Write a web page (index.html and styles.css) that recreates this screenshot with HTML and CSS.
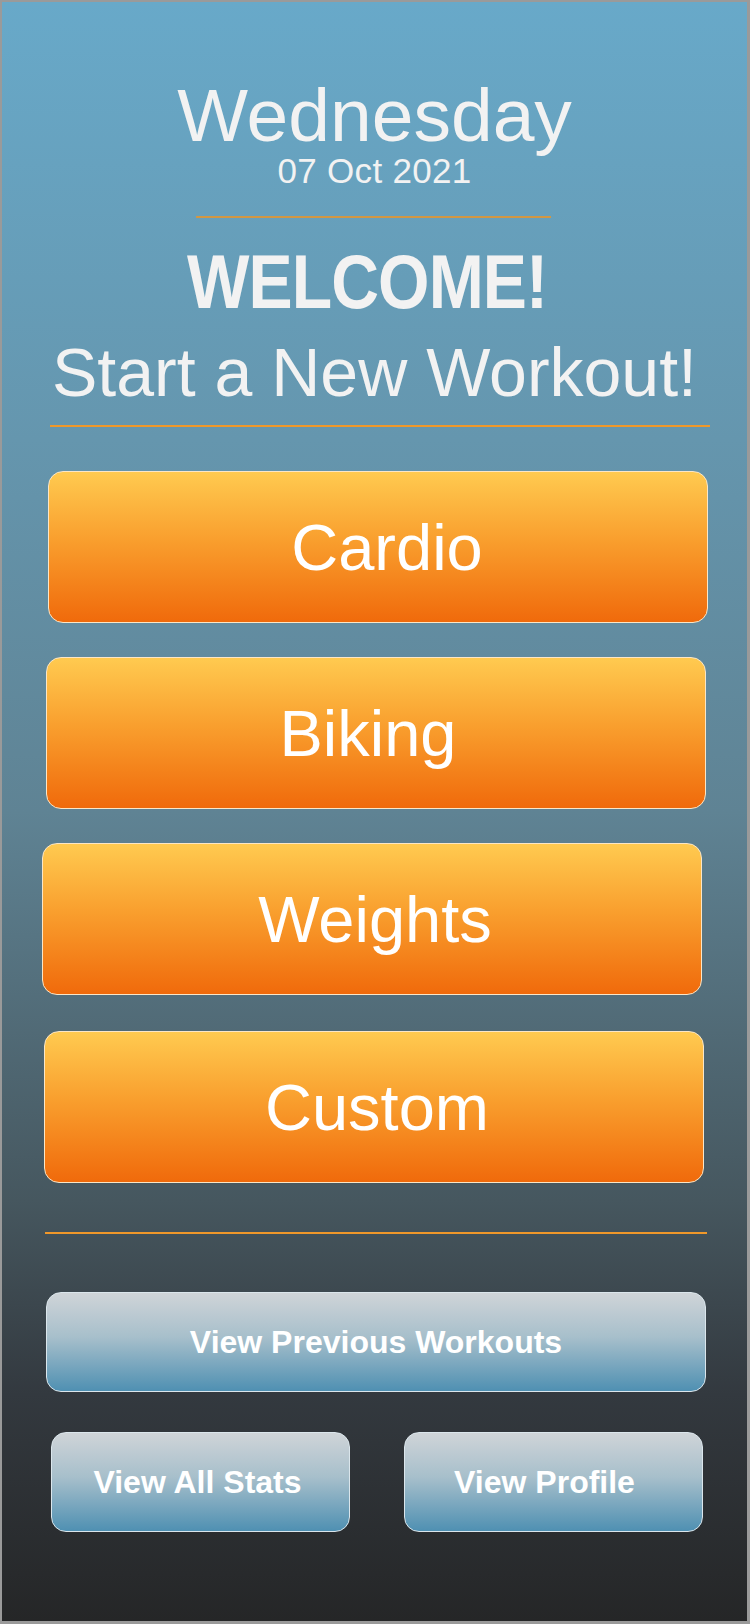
FILE: index.html
```html
<!DOCTYPE html>
<html lang="en">
<head>
<meta charset="utf-8">
<title>Workout Home</title>
<link rel="stylesheet" href="styles.css">
</head>
<body>
<main class="screen">
  <header class="header">
    <h1 class="day">Wednesday</h1>
    <p class="date">07 Oct 2021</p>
    <hr class="rule rule-short">
    <h2 class="welcome">WELCOME!</h2>
    <p class="start">Start a New Workout!</p>
    <hr class="rule rule-wide">
  </header>
  <section class="workouts">
    <button class="btn-orange b-cardio">Cardio</button>
    <button class="btn-orange b-biking">Biking</button>
    <button class="btn-orange b-weights">Weights</button>
    <button class="btn-orange b-custom">Custom</button>
  </section>
  <hr class="rule rule-bottom">
  <section class="nav">
    <button class="btn-blue b-previous">View Previous Workouts</button>
    <div class="nav-row">
      <button class="btn-blue b-small b-stats">View All Stats</button>
      <button class="btn-blue b-small b-profile">View Profile</button>
    </div>
  </section>
</main>
</body>
</html>
```
FILE: styles.css
```css
* { box-sizing: border-box; }
html, body { margin: 0; padding: 0; }
body { background: #9a9a9a; }

.screen {
  width: 750px;
  height: 1624px;
  border-style: solid;
  border-color: #9a9a9a;
  border-width: 2px 3px 3px 2px;
  background: linear-gradient(180deg, #68a9c9 0%, #6596ae 27%, #5f8394 50%, #46575f 74%, #33393f 86%, #252627 100%);
  font-family: "Liberation Sans", Arial, sans-serif;
  display: flex;
  flex-direction: column;
  align-items: flex-start;
  padding-top: 74px;
}

.header {
  width: 100%;
  display: flex;
  flex-direction: column;
  align-items: center;
  color: #f2f2f2;
}
.day {
  margin: 0;
  font-weight: 400;
  font-size: 75px;
  line-height: 78px;
}
.date {
  margin: 2px 0 0 0;
  font-size: 35px;
  line-height: 30px;
  letter-spacing: 0.3px;
}
.rule {
  border: 0;
  margin: 0;
  height: 2px;
  background: #e4952e;
}
.rule-short { width: 355px; margin-top: 30px; margin-left: -2px; opacity: 0.85; }
.welcome {
  margin: 24px 0 0 -14px;
  font-family: "Liberation Sans", Arial, sans-serif;
  font-weight: 700;
  font-size: 76px;
  line-height: 80px;
  letter-spacing: -1px;
  transform: scaleX(0.87);
}
.start {
  margin: 12px 0 0 0;
  font-size: 68px;
  line-height: 76px;
}
.rule-wide { width: 660px; margin-top: 15px; margin-left: 10px; background: #f0982a; }

.workouts {
  display: flex;
  flex-direction: column;
  gap: 34px;
  margin-top: 44px;
}
.btn-orange {
  width: 660px;
  height: 152px;
  border: 1.5px solid #fbe6c6;
  border-radius: 15px;
  background: linear-gradient(180deg, #ffca50 0%, #f99f2e 45%, #f06a0b 100%);
  color: #ffffff;
  font-family: "Liberation Sans", Arial, sans-serif;
  font-size: 65px;
  display: flex;
  align-items: center;
  justify-content: center;
  padding: 0;
}
.b-cardio { margin-left: 46px; padding-left: 18px; }
.b-biking { margin-left: 44px; padding-right: 16px; }
.b-weights { margin-left: 40px; margin-top: 0; padding-left: 6px; }
.b-custom { margin-left: 42px; margin-top: 2px; padding-left: 6px; }

.rule-bottom { width: 662px; margin-top: 49px; margin-left: 43px; background: #f0982a; }

.nav {
  display: flex;
  flex-direction: column;
  margin-top: 58px;
}
.btn-blue {
  border: 1.5px solid #dbe6ec;
  border-radius: 15px;
  background: linear-gradient(180deg, #cfd4d8 0%, #a7bfcb 45%, #4f90b2 100%);
  color: #ffffff;
  font-family: "Liberation Sans", Arial, sans-serif;
  font-weight: 700;
  font-size: 32px;
  display: flex;
  align-items: center;
  justify-content: center;
  padding: 0;
}
.b-previous { width: 660px; height: 100px; margin-left: 44px; }
.nav-row {
  display: flex;
  gap: 54px;
  margin-top: 40px;
  margin-left: 49px;
}
.b-small { width: 299px; height: 100px; }
.b-stats { padding-right: 6px; }
.b-profile { padding-right: 18px; }
```
